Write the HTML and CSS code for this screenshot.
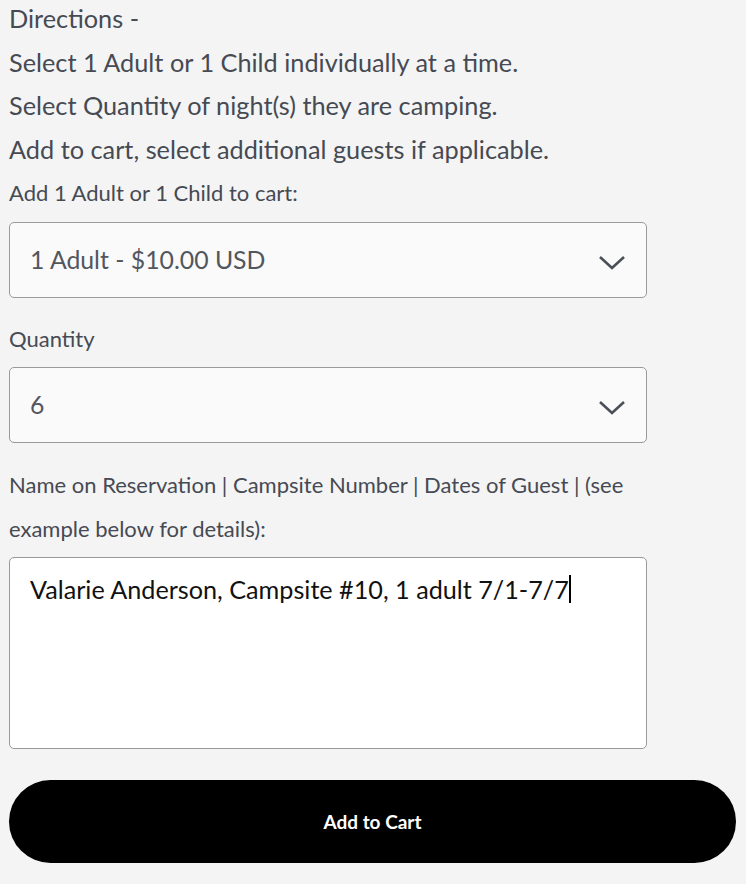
FILE: index.html
```html
<!DOCTYPE html>
<html>
<head>
<meta charset="utf-8">
<link rel="stylesheet" href="styles.css">
</head>
<body>
<div class="page">
  <div class="directions">
    <p>Directions -</p>
    <p>Select 1 Adult or 1 Child individually at a time.</p>
    <p>Select Quantity of night(s) they are camping.</p>
    <p>Add to cart, select additional guests if applicable.</p>
  </div>
  <label class="label first">Add 1 Adult or 1 Child to cart:</label>
  <div class="select first">
    <span>1 Adult - $10.00 USD</span>
    <svg class="chev" width="28" height="16" viewBox="0 0 28 16"><path d="M2 2 L14 13 L26 2" fill="none" stroke="#4b4f58" stroke-width="2.6"/></svg>
  </div>
  <label class="label qty">Quantity</label>
  <div class="select second">
    <span>6</span>
    <svg class="chev" width="28" height="16" viewBox="0 0 28 16"><path d="M2 2 L14 13 L26 2" fill="none" stroke="#4b4f58" stroke-width="2.6"/></svg>
  </div>
  <label class="label note">Name on Reservation | Campsite Number | Dates of Guest | (see example below for details):</label>
  <div class="textarea"><span>Valarie Anderson, Campsite #10, 1 adult 7/1-7/7</span><span class="caret"></span></div>
  <button class="cart">Add to Cart</button>
</div>
</body>
</html>
```

FILE: styles.css
```css
html, body {
  margin: 0;
  padding: 0;
  background: #f4f4f4;
}
body {
  font-family: Lato, "Open Sans", sans-serif;
  color: #464a53;
}
.page {
  padding: 0 11px 0 9px;
  display: flex;
  flex-direction: column;
  align-items: flex-start;
}
.directions {
  margin-top: -3px;
}
.directions p {
  margin: 0;
  font-size: 25.3px;
  line-height: 43.7px;
}
.label {
  font-size: 22px;
  line-height: 24px;
  display: block;
}
.label.first {
  margin-top: 9px;
}
.select {
  box-sizing: border-box;
  width: 638px;
  height: 76px;
  border: 1px solid #9a9a9a;
  border-radius: 5px;
  background: #fafafa;
  display: flex;
  align-items: center;
  justify-content: space-between;
  padding: 0 20px 0 20px;
  font-size: 24.8px;
  color: #53565d;
}
.select.first {
  margin-top: 17px;
}
.select.second {
  margin-top: 16px;
}
.select .chev {
  margin-top: 6px;
}
.label.qty {
  margin-top: 29px;
}
.label.note {
  margin-top: 20px;
  line-height: 44px;
  width: 638px;
}
.textarea {
  box-sizing: border-box;
  width: 638px;
  height: 192px;
  margin-top: 6px;
  border: 1px solid #9a9a9a;
  border-radius: 5px;
  background: #ffffff;
  padding: 16px 20px;
  font-size: 25.2px;
  line-height: 30px;
  color: #111111;
  display: flex;
  align-items: flex-start;
}
.caret {
  display: inline-block;
  width: 2px;
  height: 28px;
  background: #000;
  margin-top: 1px;
}
.cart {
  width: 727px;
  height: 83px;
  margin-top: 31px;
  border: none;
  border-radius: 42px;
  background: #000;
  color: #fff;
  font-family: Lato, sans-serif;
  font-weight: 700;
  font-size: 19px;
}
```
